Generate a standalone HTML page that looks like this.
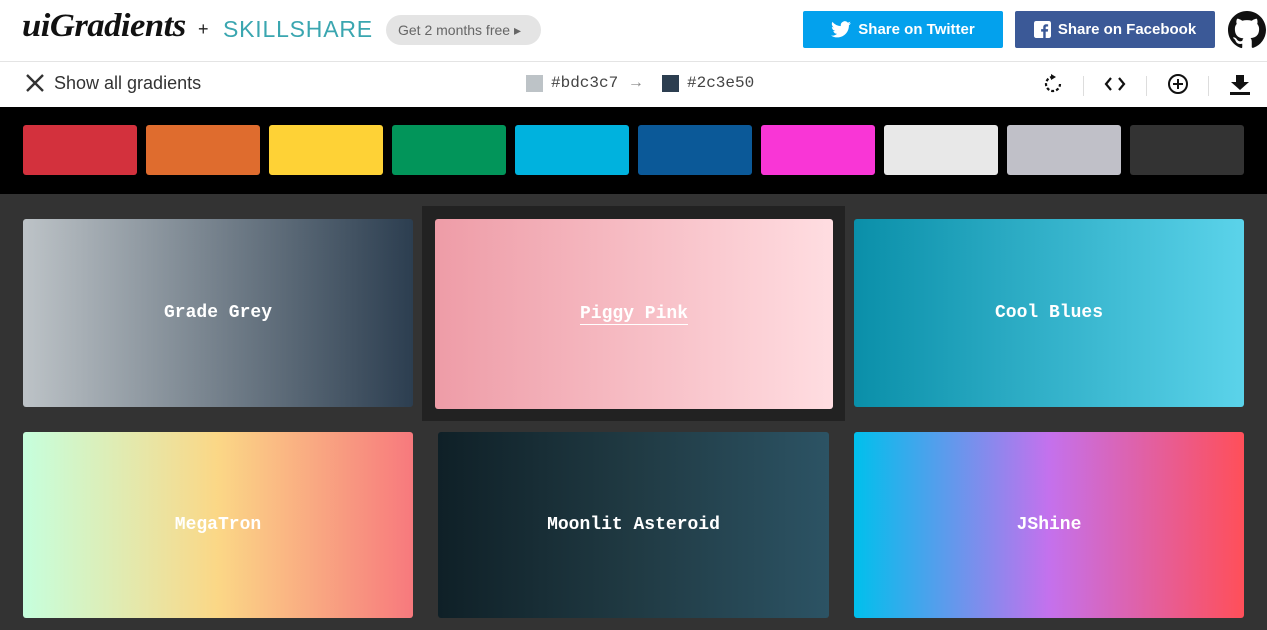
<!DOCTYPE html>
<html><head><style>
*{margin:0;padding:0;box-sizing:border-box}
body{width:1267px;height:630px;overflow:hidden;background:#333;font-family:"Liberation Sans",sans-serif;position:relative}
.a{position:absolute}
.hdr{left:0;top:0;width:1267px;height:62px;background:#fff;border-bottom:1px solid #e4e4e4}
.tb{left:0;top:62px;width:1267px;height:45px;background:#fff}
.band{left:0;top:107px;width:1267px;height:87px;background:#000}
.sw{top:125px;width:114px;height:50px;border-radius:3px}
.card{border-radius:3px;display:flex;align-items:center;justify-content:center;color:#fff;font-family:"Liberation Mono",monospace;font-size:18px;font-weight:bold}
.btn{top:11px;height:37px;border-radius:2px;color:#fff;font-size:15px;font-weight:bold;display:flex;align-items:center;justify-content:center;gap:7px}
.sep{top:76px;width:1px;height:20px;background:#ddd}
</style></head><body>
<div class="a hdr"></div>
<div class="a" style="left:22px;top:8px;font-family:'Liberation Serif',serif;font-style:italic;font-weight:bold;font-size:33px;color:#111;letter-spacing:-0.5px;transform:scaleX(1.05);transform-origin:left">uiGradients</div>
<div class="a" style="left:198px;top:19px;font-size:18px;color:#222">+</div>
<div class="a" style="left:223px;top:16px;font-size:23px;color:#3aa6b0;letter-spacing:0.8px">SKILLSHARE</div>
<div class="a" style="left:386px;top:15px;width:155px;height:30px;border-radius:15px;background:#e4e4e4;color:#666;font-size:14px;line-height:30px;padding-left:12px">Get 2 months free &#9656;</div>
<div class="a btn" style="left:803px;width:200px;background:#03a1ed"><svg width="20" height="17" viewBox="0 0 24 20"><path fill="#fff" d="M24 2.4a10 10 0 0 1-2.8.8A5 5 0 0 0 23.3.5a10 10 0 0 1-3.1 1.2A4.9 4.9 0 0 0 11.8 6 14 14 0 0 1 1.7.9a4.9 4.9 0 0 0 1.5 6.6 4.9 4.9 0 0 1-2.2-.6 4.9 4.9 0 0 0 3.9 4.8 4.9 4.9 0 0 1-2.2.1 4.9 4.9 0 0 0 4.6 3.4A9.9 9.9 0 0 1 0 17.3 14 14 0 0 0 7.5 19.5c9 0 14-7.5 14-14v-.6A10 10 0 0 0 24 2.4z"/></svg>Share on Twitter</div>
<div class="a btn" style="left:1015px;width:200px;background:#3b5997"><svg width="17" height="17" viewBox="0 0 16 16"><rect width="16" height="16" rx="2" fill="#fff"/><path fill="#3b5997" d="M11 16V10h2l.3-2.3H11V6.3c0-.7.2-1.1 1.1-1.1h1.2v-2a16 16 0 0 0-1.8-.1C9.8 3.1 8.7 4.1 8.7 6v1.7h-2V10h2v6z"/></svg>Share on Facebook</div>
<svg class="a" style="left:1228px;top:11px" width="38" height="38" viewBox="0 0 16 16"><path fill="#111" d="M8 0C3.6 0 0 3.6 0 8c0 3.5 2.3 6.5 5.500 7.6.4.1.5-.2.5-.4v-1.4c-2.2.5-2.7-1-2.7-1-.4-.9-.9-1.2-.9-1.2-.7-.5.1-.5.1-.5.8.1 1.2.8 1.2.8.7 1.2 1.9.9 2.3.7.1-.5.3-.9.5-1.1-1.8-.2-3.6-.9-3.6-4 0-.9.3-1.6.8-2.1-.1-.2-.4-1 .1-2.100 0 0 .7-.2 2.2.8a7.5 7.5 0 0 1 4 0c1.5-1 2.2-.8 2.2-.8.4 1.1.2 1.9.1 2.1.5.6.8 1.3.8 2.1 0 3.1-1.9 3.7-3.6 3.9.3.3.5.8.5 1.5v2.2c0 .2.1.5.6.4A8 8 0 0 0 16 8c0-4.4-3.6-8-8-8z"/></svg>
<div class="a tb"></div>
<svg class="a" style="left:25px;top:73px" width="20" height="20" viewBox="0 0 20 20"><path d="M2 2L18 18M18 2L2 18" stroke="#333" stroke-width="2.4"/></svg>
<div class="a" style="left:54px;top:73px;font-size:18px;color:#333">Show all gradients</div>
<div class="a" style="left:526px;top:75px;width:17px;height:17px;background:#bdc3c7"></div>
<div class="a" style="left:551px;top:74px;font-family:'Liberation Mono',monospace;font-size:16px;color:#444">#bdc3c7 <span style="font-family:'Liberation Sans';color:#888">&rarr;</span></div>
<div class="a" style="left:662px;top:75px;width:17px;height:17px;background:#2c3e50"></div>
<div class="a" style="left:687px;top:74px;font-family:'Liberation Mono',monospace;font-size:16px;color:#444">#2c3e50</div>
<svg class="a" style="left:1043px;top:74px" width="20" height="20" viewBox="0 0 20 20"><path d="M10 3A7 7 0 1 0 17 10" fill="none" stroke="#111" stroke-width="2.2" stroke-dasharray="3 2"/><path d="M8 0L13 3L8 6z" fill="#111"/></svg>
<div class="a sep" style="left:1083px"></div>
<svg class="a" style="left:1104px;top:76px" width="22" height="16" viewBox="0 0 22 16"><path d="M7 2L2 8L7 14M15 2L20 8L15 14" fill="none" stroke="#111" stroke-width="2.2"/></svg>
<div class="a sep" style="left:1146px"></div>
<svg class="a" style="left:1167px;top:73px" width="22" height="22" viewBox="0 0 22 22"><circle cx="11" cy="11" r="9" fill="none" stroke="#111" stroke-width="2"/><path d="M11 6V16M6 11H16" stroke="#111" stroke-width="2"/></svg>
<div class="a sep" style="left:1208px"></div>
<svg class="a" style="left:1229px;top:73px" width="22" height="22" viewBox="0 0 22 22"><path d="M7 2H15V9H20L11 17L2 9H7z" fill="#111"/><rect x="1" y="19" width="20" height="3" fill="#111"/></svg>
<div class="a band"></div>
<div class="a sw" style="left:23px;background:#d3313d"></div>
<div class="a sw" style="left:146px;background:#df6c2e"></div>
<div class="a sw" style="left:269px;background:#fed236"></div>
<div class="a sw" style="left:392px;background:#02955a"></div>
<div class="a sw" style="left:515px;background:#00b2de"></div>
<div class="a sw" style="left:638px;background:#0b5998"></div>
<div class="a sw" style="left:761px;background:#f936d6"></div>
<div class="a sw" style="left:884px;background:#e8e8e8"></div>
<div class="a sw" style="left:1007px;background:#c0c0c8"></div>
<div class="a sw" style="left:1130px;background:#333"></div>
<div class="a card" style="left:23px;top:219px;width:390px;height:188px;background:linear-gradient(to right,#bdc3c7,#2c3e50)">Grade Grey</div>
<div class="a" style="left:422px;top:206px;width:423px;height:215px;background:#222"></div>
<div class="a card" style="left:435px;top:219px;width:398px;height:190px;background:linear-gradient(to right,#ee9ca7,#ffdde1)"><span style="border-bottom:1px solid #fff">Piggy Pink</span></div>
<div class="a card" style="left:854px;top:219px;width:390px;height:188px;background:linear-gradient(to right,#0a8fa9,#5bd3ea)">Cool Blues</div>
<div class="a card" style="left:23px;top:432px;width:390px;height:186px;background:linear-gradient(to right,#c6ffdd,#fbd786,#f7797d)">MegaTron</div>
<div class="a card" style="left:438px;top:432px;width:391px;height:186px;background:linear-gradient(to right,#0f2027,#203a43,#2c5364)">Moonlit Asteroid</div>
<div class="a card" style="left:854px;top:432px;width:390px;height:186px;background:linear-gradient(to right,#00c0ec,#c471ed,#ff4f59)">JShine</div>
</body></html>
